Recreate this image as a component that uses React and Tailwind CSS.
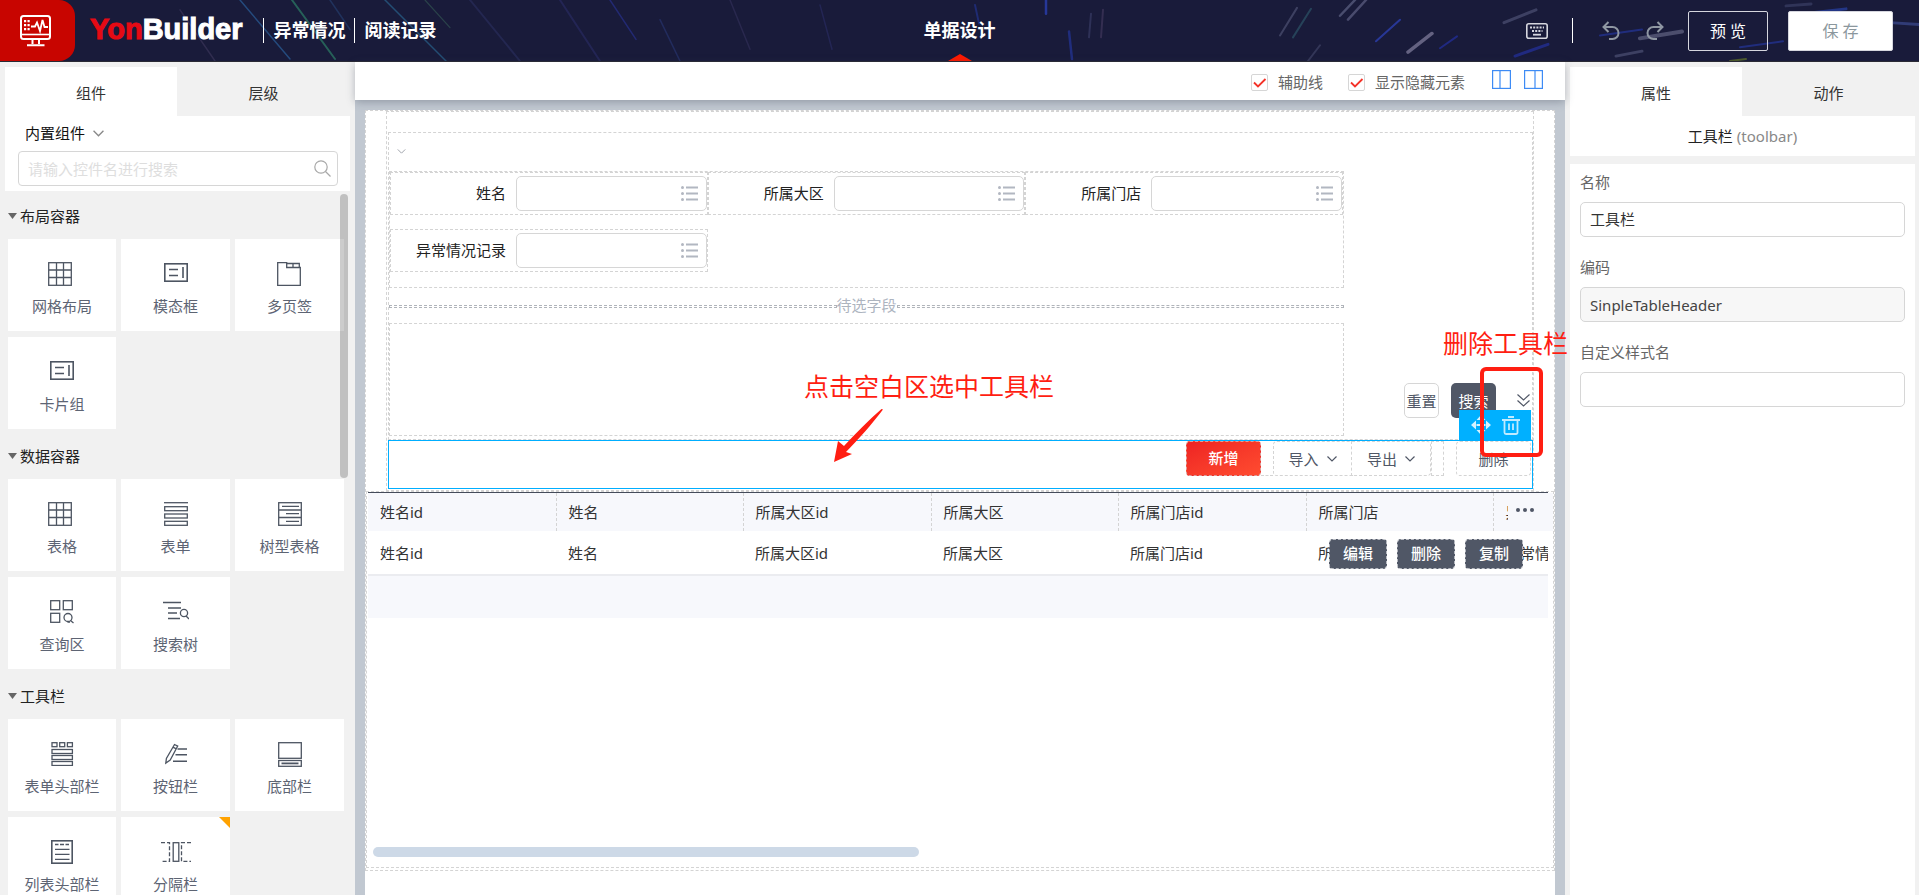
import React from "react";

const FONT = "font-['Noto_Sans','Noto_Sans_CJK_SC',sans-serif]";

function Svg({ w = 24, h = 24, children, className = "" }) {
  return (
    <svg
      width={w}
      height={h}
      viewBox={`0 0 ${w} ${h}`}
      fill="none"
      stroke="currentColor"
      strokeWidth="1.3"
      className={className}
      aria-hidden="true"
    >
      {children}
    </svg>
  );
}

const icons = {
  grid: (
    <Svg w={28}>
      <rect x="0.7" y="0.7" width="22.6" height="22.6" />
      <path d="M8.5 1v22M15.5 1v22M1 8h22M1 15.5h22" />
    </Svg>
  ),
  modal: (
    <Svg>
      <rect x="0.8" y="1.8" width="22.4" height="17.4" strokeWidth="1.6" />
      <path d="M5 7.500h9M5 13.500h9M19 5v11" strokeWidth="1.6" />
    </Svg>
  ),
  tabs: (
    <Svg w={26}>
      <path d="M0.7 0.7h9v4.8h13.6v17.8H0.7z" />
      <path d="M9.7 1.5h12.6v4M16 1.5v4" />
    </Svg>
  ),
  form: (
    <Svg>
      <path d="M0 0.7h24" />
      <rect x="0.7" y="4.7" width="22.6" height="4" />
      <rect x="0.7" y="12" width="22.6" height="4" />
      <rect x="0.7" y="19.3" width="22.6" height="4" />
    </Svg>
  ),
  tree: (
    <Svg>
      <rect x="0.7" y="0.7" width="22.6" height="22.6" />
      <path d="M1 8h22M1 15.5h22M4 4.3h17M8 11.7h13M8 19.3h13" />
    </Svg>
  ),
  query: (
    <Svg>
      <rect x="0.7" y="0.7" width="9" height="9" />
      <rect x="13.3" y="0.7" width="9" height="9" />
      <rect x="0.7" y="13.3" width="9" height="9" />
      <circle cx="18" cy="17.5" r="4" />
      <path d="M20.500 20.5l3 2.5M17.500 22h2.5" />
    </Svg>
  ),
  search: (
    <Svg w={26}>
      <path d="M0 2.5h18M5 8h13M5 13h9M5 18.5h12" strokeWidth="1.7" />
      <circle cx="21" cy="13" r="3.6" />
      <path d="M23 16l3 3" />
    </Svg>
  ),
  formHead: (
    <Svg>
      <rect x="2" y="0.7" width="5" height="4" />
      <rect x="9.7" y="0.7" width="5" height="4" />
      <rect x="17.4" y="0.7" width="5" height="4" />
      <rect x="2" y="7.5" width="20.4" height="4" />
      <rect x="2" y="13.5" width="20.4" height="4" />
      <rect x="2" y="19.5" width="20.4" height="4" />
    </Svg>
  ),
  buttons: (
    <Svg>
      <path d="M10.5 2.5l3.2 1.6-7.5 14-4.4 3 .6-4.6zM9 5.2l3.3 1.7" />
      <path d="M13.5 7H23M11.5 12.8H23M9 19.3h14" strokeWidth="1.6" />
    </Svg>
  ),
  bottom: (
    <Svg w={24} h={25}>
      <rect x="0.7" y="0.7" width="22.6" height="15.6" />
      <rect x="0.7" y="18.5" width="22.6" height="5.8" />
      <path d="M3.5 21.4h17" strokeWidth="1.8" />
    </Svg>
  ),
  listHead: (
    <Svg>
      <rect x="1.8" y="0.8" width="20.4" height="22.4" strokeWidth="1.6" />
      <path d="M5 4.5h3.5M10 4.5h4M15.5 4.5H19M5 9.3h14.5M5 14.3h14.5M5 19.3h14.5" />
    </Svg>
  ),
  split: (
    <Svg w={30} h={24}>
      <rect x="12.2" y="2.7" width="5.6" height="18.6" />
      <path d="M0 2.7h8.5v18.6H0" strokeDasharray="4 2" />
      <path d="M30 2.7h-9.5v18.6H30" strokeDasharray="4 2" />
    </Svg>
  ),
};

const sections = [
  {
    title: "布局容器",
    items: [
      ["网格布局", "grid"],
      ["模态框", "modal"],
      ["多页签", "tabs"],
      ["卡片组", "modal"],
    ],
  },
  {
    title: "数据容器",
    items: [
      ["表格", "grid"],
      ["表单", "form"],
      ["树型表格", "tree"],
      ["查询区", "query"],
      ["搜索树", "search"],
    ],
  },
  {
    title: "工具栏",
    items: [
      ["表单头部栏", "formHead"],
      ["按钮栏", "buttons"],
      ["底部栏", "bottom"],
      ["列表头部栏", "listHead"],
      ["分隔栏", "split", true],
    ],
  },
];

const columns = [
  ["姓名id", "w-[188px]"],
  ["姓名", "w-[187px]"],
  ["所属大区id", "w-[188px]"],
  ["所属大区", "w-[187px]"],
  ["所属门店id", "w-[188px]"],
  ["所属门店", "w-[187px]"],
  ["异常情况", "w-[188px]"],
];

function Chevron({ w = 10, h = 6, className = "" }) {
  return (
    <svg width={w} height={h} viewBox="0 0 10 6" fill="none" stroke="currentColor" strokeWidth="1.2" className={className} aria-hidden="true">
      <path d="M0.5 0.5L5 5l4.5-4.5" />
    </svg>
  );
}

function Streaks() {
  const lines = [
    [240, 0, 290, 60, "#2a5f9a", 1.5, 0.7],
    [292, 0, 335, 60, "#2f8f6d", 2, 0.6],
    [330, 0, 350, 30, "#27497f", 1.5, 0.5],
    [385, 0, 446, 62, "#2a6f9a", 1.5, 0.6],
    [425, 0, 450, 28, "#3b6a5a", 1.2, 0.5],
    [180, 10, 215, 62, "#3a3559", 1.5, 0.7],
    [470, 0, 520, 62, "#2b2f60", 2, 0.6],
    [560, 0, 600, 62, "#2a2c66", 2, 0.6],
    [610, 0, 636, 40, "#27308a", 1.5, 0.7],
    [660, 20, 680, 62, "#2b3c80", 1.5, 0.5],
    [730, 0, 750, 50, "#34315c", 1.5, 0.6],
    [820, 5, 832, 50, "#2b2d66", 1.5, 0.6],
    [975, 5, 979, 24, "#23369a", 2, 0.6],
    [1046, 0, 1046, 14, "#2a3fb0", 2.5, 0.8],
    [1069, 32, 1072, 60, "#24369a", 2.5, 0.7],
    [1091, 14, 1089, 38, "#34375f", 2, 0.8],
    [1103, 10, 1101, 38, "#3b3357", 2, 0.8],
    [1297, 8, 1280, 36, "#565a7c", 2, 0.6],
    [1311, 9, 1293, 38, "#2f5d6e", 2, 0.6],
    [1355, 0, 1340, 16, "#565a7c", 2.5, 0.8],
    [1366, 0, 1348, 20, "#6a6c90", 2.5, 0.6],
    [1400, 20, 1376, 42, "#2c3fae", 2, 0.8],
    [1432, 34, 1408, 53, "#8481a0", 3.5, 0.7],
    [1320, 46, 1308, 62, "#45496c", 2, 0.6],
    [1536, 10, 1504, 23, "#55597e", 3, 0.6],
    [1457, 37, 1440, 49, "#2330a0", 2, 0.7],
    [1548, 45, 1515, 57, "#2634b0", 3, 0.6],
    [1642, 30, 1600, 36, "#24359a", 2, 0.7],
    [1682, 32, 1640, 39, "#6e7090", 4, 0.6],
    [1642, 52, 1616, 57, "#55597e", 3, 0.6],
    [1811, 4, 1786, 6, "#3a3f66", 3, 0.7],
    [1846, 9, 1812, 13, "#2b48b8", 3, 0.6],
    [1783, 42, 1740, 48, "#24359a", 2, 0.7],
    [1919, 25, 1890, 23, "#3c4a90", 3, 0.7],
    [1746, 60, 1730, 62, "#5a6a2a", 2, 0.8],
  ];
  return (
    <svg className="absolute inset-0 h-full w-full" viewBox="0 0 1919 62" preserveAspectRatio="none" aria-hidden="true">
      {lines.map(([x1, y1, x2, y2, c, w, o]) => (
        <line key={`${x1}-${y1}`} x1={x1} y1={y1} x2={x2} y2={y2} stroke={c} strokeWidth={w} opacity={o} strokeLinecap="round" />
      ))}
    </svg>
  );
}

function Header() {
  return (
    <header className="relative grid h-[62px] shrink-0 grid-cols-[1fr_auto_1fr] items-stretch border-b border-[#2a2a35] bg-[#191b3a] text-white">
      <Streaks />
      <div className="relative flex items-center">
        <div className="flex h-full w-[75px] items-center rounded-r-2xl bg-[#c80500] pl-5">
          <svg width="32" height="32" viewBox="0 0 32 32" fill="none" stroke="#fff" strokeWidth="2" aria-hidden="true">
            <rect x="1" y="1" width="29" height="23" rx="2.5" />
            <path d="M2 19.5h27" strokeWidth="1.6" />
            <path d="M12.5 24v5M19 24v5M7 30.3h17.5" />
            <path d="M11 11.5h4l2-4 3 8.500 2.500-11 2 7h3.500" strokeWidth="1.8" />
            <g fill="#fff" stroke="none">
              <path d="M4 5h2.200v2.200H4zM7.500 5h2.200v2.200H7.500zM4 9h2.200v2.200H4zM7.500 9h2.200v2.200H7.500zM4 13h2.200v2.200H4zM7.500 13h2.200v2.200H7.500z" />
            </g>
          </svg>
        </div>
        <div className="ml-[15px] pb-1 font-['Liberation_Sans',sans-serif] text-[29px] leading-8 font-bold [-webkit-text-stroke:1px]">
          <span className="text-[#e60a14]">Yon</span>Builder
        </div>
        <span className="ml-5 h-[25px] w-px bg-white" />
        <span className="ml-[10px] pb-[2px] text-lg leading-6 font-bold">异常情况</span>
        <span className="ml-[8px] h-[25px] w-px bg-white" />
        <span className="ml-[10px] pb-[2px] text-lg leading-6 font-bold">阅读记录</span>
      </div>
      <div className="relative flex items-center">
        <h1 className="pb-[2px] text-lg leading-6 font-bold">单据设计</h1>
        <svg width="24" height="7" viewBox="0 0 24 7" className="absolute bottom-0 left-1/2 -translate-x-1/2" aria-hidden="true">
          <path d="M0 7L12 0l12 7z" fill="#ff1a00" />
        </svg>
      </div>
      <div className="relative flex items-center justify-end pr-[26px]">
        <button type="button" aria-label="快捷键" className="text-[#d5d6de]">
          <svg width="22" height="16" viewBox="0 0 22 16" fill="none" stroke="currentColor" strokeWidth="1.6" aria-hidden="true">
            <rect x="0.8" y="0.8" width="20.4" height="14.4" rx="2" />
            <path d="M4 4.500h14" strokeDasharray="2 1.200" strokeWidth="1.800" />
            <path d="M6 8h10.500" strokeDasharray="2 1.200" strokeWidth="1.800" />
            <path d="M7 11.700h8" strokeWidth="1.800" />
          </svg>
        </button>
        <span className="mx-6 h-[25px] w-px bg-white" />
        <button type="button" aria-label="撤销" className="ml-[5px] text-[#8f97a3]">
          <svg width="18" height="19" viewBox="0 0 18 19" fill="none" stroke="currentColor" strokeWidth="2" aria-hidden="true">
            <path d="M6.500 1L1.500 6l5 5M1.500 6h9a6 6 0 0 1 0 12H7" />
          </svg>
        </button>
        <button type="button" aria-label="重做" className="ml-[26px] text-[#8f97a3]">
          <svg width="18" height="19" viewBox="0 0 18 19" fill="none" stroke="currentColor" strokeWidth="2" aria-hidden="true">
            <path d="M11.500 1l5 5-5 5M16.500 6h-9a6 6 0 0 0 0 12H11" />
          </svg>
        </button>
        <button type="button" className="ml-6 h-10 w-20 rounded-xs border border-[#d5d6de] text-base leading-5 text-white">预 览</button>
        <button type="button" className="ml-5 h-10 w-[105px] rounded-xs border border-[#d5d6de] bg-white text-base leading-5 text-[#8b979d]">保 存</button>
      </div>
    </header>
  );
}

function Tabs({ items }) {
  return (
    <div className="grid h-[49px] grid-cols-[172px_1fr] text-[#333]" role="tablist">
      {items.map((t, i) => (
        <button
          key={t}
          type="button"
          role="tab"
          aria-selected={i === 0}
          className={i === 0 ? "bg-white pt-[2px]" : "bg-[#f1f1f1] pt-[2px]"}
        >
          {t}
        </button>
      ))}
    </div>
  );
}

function Palette() {
  return (
    <aside className="flex w-[355px] shrink-0 flex-col bg-[#f1f1f1]">
      <div className="mt-[5px] mr-[5px] ml-[5px]">
        <Tabs items={["组件", "层级"]} />
        <div className="h-[75px] bg-white pt-[7px] pr-3 pl-[13px]">
          <button type="button" className="flex items-center gap-2 pl-[7px] text-[#111]">
            内置组件
            <Chevron w={11} h={7} className="text-[#888]" />
          </button>
          <div className="relative mt-2">
            <input
              type="text"
              aria-label="搜索控件"
              placeholder="请输入控件名进行搜索"
              className="h-[35px] w-full rounded-[4px] border border-[#d6d6d6] px-[9px] outline-none placeholder:text-[#dedede]"
            />
            <svg width="17" height="17" viewBox="0 0 17 17" fill="none" stroke="#a8a8a8" strokeWidth="1.200" className="absolute top-[9px] right-[7px]" aria-hidden="true">
              <circle cx="7" cy="7" r="6.200" />
              <path d="M11.500 11.500l5 5" />
            </svg>
          </div>
        </div>
      </div>
      <div className="relative min-h-0 flex-1 overflow-hidden pl-2">
        <div className="absolute top-[3px] right-[7px] z-10 h-[284px] w-2 rounded-full bg-black/20" />
        {sections.map((s, i) => (
          <section key={s.title}>
            <h2 className={i === 0 ? "flex h-12 items-center gap-[3px] pt-[2px] text-[#222]" : "flex h-[50px] items-center gap-[3px] pt-[4px] text-[#222]"}>
              <svg width="9" height="6" viewBox="0 0 9 6" className="text-[#666]" aria-hidden="true">
                <path d="M0 0h9L4.500 6z" fill="currentColor" />
              </svg>
              {s.title}
            </h2>
            <div className="grid grid-cols-[108px_109px_109px] gap-x-[5px] gap-y-[6px]">
              {s.items.map(([label, icon, flag]) => (
                <button key={label} type="button" className="relative flex h-[92px] flex-col items-center bg-white pt-[23px] text-[#5d6473]">
                  <span className="flex h-6 items-start text-[#4d5562]">{icons[icon]}</span>
                  <span className="mt-[10px]">{label}</span>
                  {flag && (
                    <svg width="11" height="11" viewBox="0 0 11 11" className="absolute top-0 right-0" aria-hidden="true">
                      <path d="M0 0h11v11z" fill="#ffa200" />
                    </svg>
                  )}
                </button>
              ))}
            </div>
          </section>
        ))}
      </div>
    </aside>
  );
}

function Check({ id, label }) {
  return (
    <div className="flex items-center gap-[10px]">
      <span className="grid">
        <input id={id} type="checkbox" defaultChecked className="peer col-start-1 row-start-1 size-[17px] appearance-none rounded-[2px] border border-[#d6d6d6] bg-white" />
        <svg width="17" height="17" viewBox="0 0 17 17" fill="none" stroke="#f43228" strokeWidth="1.800" className="pointer-events-none invisible col-start-1 row-start-1 peer-checked:visible" aria-hidden="true">
          <path d="M3 8.500l4 4 7.500-7.500" />
        </svg>
      </span>
      <label htmlFor={id} className="text-[#666]">{label}</label>
    </div>
  );
}

function Field({ id, label }) {
  return (
    <div className="flex items-center border border-dashed border-[#d4d4d4] py-[3px]">
      <label htmlFor={id} className="w-[115px] shrink-0 pb-[2px] text-right text-[#222]">{label}</label>
      <div className="relative ml-[10px] flex-1">
        <input id={id} type="text" className="block h-[35px] w-full rounded-[5px] border border-[#d6d6d6] bg-white px-2 outline-none" />
        <svg width="17" height="15" viewBox="0 0 17 15" fill="#b2b7c1" className="absolute top-[10px] right-[9px]" aria-hidden="true">
          <circle cx="1.500" cy="1.500" r="1.500" />
          <circle cx="1.500" cy="7.500" r="1.500" />
          <circle cx="1.500" cy="13.500" r="1.500" />
          <path d="M5 .6h12v1.900H5zM5 6.600h12v1.900H5zM5 12.600h12v1.900H5z" />
        </svg>
      </div>
    </div>
  );
}

function QueryArea() {
  return (
    <div className="flex border border-dashed border-[#d4d4d4] pb-[3px]">
      <div className="min-w-0 flex-1">
        <div className="flex h-[38px] items-center pl-2">
          <button type="button" aria-label="折叠" className="-mt-[2px] text-[#a0a4ac]">
            <Chevron w={9} h={5} />
          </button>
        </div>
        <div className="grid grid-cols-3 gap-y-[14px] border border-dashed border-[#d4d4d4] pb-[15px]">
          <Field id="f-name" label="姓名" />
          <Field id="f-region" label="所属大区" />
          <Field id="f-store" label="所属门店" />
          <Field id="f-record" label="异常情况记录" />
        </div>
        <div className="flex h-[35px] items-center pt-[2px] text-[#adb4bf]">
          <span className="h-[3px] flex-1 border border-dashed border-[#b0b4ba]" />
          <span className="pb-1">待选字段</span>
          <span className="h-[3px] flex-1 border border-dashed border-[#b0b4ba]" />
        </div>
        <div className="h-[113px] border border-dashed border-[#d4d4d4]" />
      </div>
      <div className="flex w-[188px] items-end justify-end pr-[2px] pb-[18px]">
        <button type="button" className="h-[35px] w-[35px] rounded-[5px] border border-[#d6d6d6] whitespace-nowrap text-[#505766]">
          <span className="-mx-2">重置</span>
        </button>
        <button type="button" className="ml-3 h-[35px] w-[45px] rounded-[5px] bg-[#505766] text-white">搜索</button>
        <button type="button" aria-label="展开" className="ml-[21px] flex h-[35px] items-center text-[#505766]">
          <svg width="13" height="13" viewBox="0 0 13 13" fill="none" stroke="currentColor" strokeWidth="1.200" aria-hidden="true">
            <path d="M.5.500l6 5.500 6-5.500M.5 6.500l6 5.500 6-5.500" />
          </svg>
        </button>
      </div>
    </div>
  );
}

function SelectedToolbar() {
  return (
    <div className="relative flex h-[49px] items-start justify-end border border-[#00aeff] pr-px text-[#505766]">
      <button type="button" className="h-[35px] w-[75px] rounded-[4px] border border-dashed border-[#dca09c] bg-linear-to-br from-[#ee2223] to-[#ff4b30] pb-[2px] font-medium text-white">新增</button>
      <span className="h-[35px] w-3 border-b border-dashed border-[#d4d4d4]" />
      <button type="button" className="flex h-[35px] w-[79px] items-center justify-center gap-2 rounded-l-[4px] border border-dashed border-[#d4d4d4]">
        导入
        <Chevron />
      </button>
      <button type="button" className="flex h-[35px] w-[79px] items-center justify-center gap-2 rounded-r-[4px] border border-l-0 border-dashed border-[#d4d4d4]">
        导出
        <Chevron />
      </button>
      <span className="h-[35px] w-[13px] border border-dashed border-[#d4d4d4]" />
      <button type="button" className="ml-3 h-[35px] w-[75px] rounded-[4px] border border-dashed border-[#d4d4d4]">删除</button>

      <div className="absolute -top-[31px] right-px flex h-[30px] w-[72px] items-center justify-around bg-[#00b0ff] px-[6px]">
        <button type="button" aria-label="移动" className="text-[#d3f1ff]">
          <svg width="20" height="20" viewBox="0 0 20 20" aria-hidden="true">
            <path d="M5.500 10h9M10 5.500v9" stroke="currentColor" strokeWidth="2" />
            <path d="M10 0l4.500 5h-9zM10 20l4.500-5h-9zM0 10l5-4.500v9zM20 10l-5-4.500v9z" fill="currentColor" />
          </svg>
        </button>
        <button type="button" aria-label="删除工具栏" className="text-[#bfeaff]">
          <svg width="18" height="19" viewBox="0 0 18 19" fill="none" stroke="currentColor" strokeWidth="1.800" aria-hidden="true">
            <path d="M0 4h18M6 1h6M2.500 4v12.500a1.500 1.500 0 0 0 1.500 1.500h10a1.500 1.500 0 0 0 1.500-1.500V4M7 7.500v6.500M11 7.500v6.500" />
          </svg>
        </button>
      </div>

      <p className="absolute -top-[71px] left-[415px] text-[25px] leading-8 whitespace-nowrap text-[#ff1e12]">点击空白区选中工具栏</p>
      <svg width="49" height="55" viewBox="0 0 49 55" className="absolute -top-[33px] left-[445px]" aria-hidden="true">
        <path d="M49 1.500L47.500 1C35 12 22 25 10 38L4 33 0 54l18-8-6-2C24 32 38 16 49 1.500z" fill="#ff1e12" />
      </svg>
      <p className="absolute -top-[114px] -right-[36px] text-[25px] leading-8 whitespace-nowrap text-[#ff1e12]">删除工具栏</p>
      <div className="pointer-events-none absolute -top-[74px] -right-[11px] h-[90px] w-[63px] rounded-[6px] border-4 border-[#ff1e12]" />
    </div>
  );
}

function DataTable() {
  return (
    <div className="flex h-[377px] flex-col border border-dashed border-[#d4d4d4]">
      <div className="flex pl-px">
        <div className="relative min-w-0 flex-1 overflow-hidden border-t border-[#454c5b]">
          <table className="w-[1313px] table-fixed border-collapse text-left text-[#333]">
            <thead>
              <tr className="h-[38px] bg-[#f7f8fc]">
                {columns.map(([c, w]) => (
                  <th key={c} scope="col" className={`${w} border-r border-dashed border-[#d4d4d4] pl-3 font-normal`}>{c}</th>
                ))}
              </tr>
            </thead>
            <tbody>
              <tr className="h-[44px] border-b-2 border-[#ebecf0]">
                {columns.map(([c]) => (
                  <td key={c} className="pt-px pl-3">{c}</td>
                ))}
              </tr>
              <tr className="h-[43px] bg-[#f7f8fc]">
                <td colSpan={7} />
              </tr>
            </tbody>
          </table>
          <button type="button" aria-label="更多" className="absolute top-0 right-0 flex h-[37px] w-10 items-center bg-[#f7f8fc] pb-1 pl-[8px]">
            <svg width="18" height="4" viewBox="0 0 18 4" fill="#505766" aria-hidden="true">
              <circle cx="2" cy="2" r="2" />
              <circle cx="9" cy="2" r="2" />
              <circle cx="16" cy="2" r="2" />
            </svg>
          </button>
          <div className="absolute top-[46px] right-[25px] flex gap-[10px]">
            {["编辑", "删除", "复制"].map((t) => (
              <button key={t} type="button" className="h-[30px] w-[58px] rounded-[4px] border border-dashed border-[#b9bcc3] bg-[#505766] pb-[2px] font-medium text-white">{t}</button>
            ))}
          </div>
        </div>
        <div className="mt-px h-[38px] w-[5px] bg-[#f7f8fc]" />
      </div>
      <div className="mt-auto mb-[10px] ml-[6px] h-[10px] w-[46%] rounded-full bg-[#cdd9e7]" />
    </div>
  );
}

function Canvas() {
  return (
    <main className="relative z-10 flex min-w-0 flex-1 flex-col bg-[#c1c8d1]">
      <div className="relative flex h-[38px] shrink-0 items-center justify-end bg-white pt-[2px] pr-[22px] shadow-[0_2px_8px_rgba(60,70,85,0.35)]">
        <Check id="guides" label="辅助线" />
        <span className="w-[25px]" />
        <Check id="hidden-items" label="显示隐藏元素" />
        <button type="button" aria-label="左侧面板" className="-mt-[6px] ml-[27px] text-[#3d8bf5]">
          <svg width="19" height="19" viewBox="0 0 19 19" fill="none" stroke="currentColor" strokeWidth="1.200" aria-hidden="true">
            <rect x="0.600" y="0.600" width="17.800" height="17.800" />
            <path d="M8 1v17" />
          </svg>
        </button>
        <button type="button" aria-label="右侧面板" className="-mt-[6px] ml-[13px] text-[#3d8bf5]">
          <svg width="19" height="19" viewBox="0 0 19 19" fill="none" stroke="currentColor" strokeWidth="1.200" aria-hidden="true">
            <rect x="0.600" y="0.600" width="17.800" height="17.800" />
            <path d="M11 1v17" />
          </svg>
        </button>
      </div>
      <div className="mx-[10px] mt-[10px] flex-1 bg-white">
        <div className="border border-dashed border-[#d4d4d4] pb-[2px]">
          <div className="mx-5 border border-dashed border-[#d4d4d4] pt-5 pb-px pl-px">
            <QueryArea />
            <SelectedToolbar />
          </div>
          <DataTable />
        </div>
      </div>
    </main>
  );
}

function Prop({ id, label, value, readOnly }) {
  return (
    <div>
      <label htmlFor={id} className="block text-[#666]">{label}</label>
      <input
        id={id}
        type="text"
        defaultValue={value}
        readOnly={readOnly}
        className={
          readOnly
            ? "mt-[10px] block h-[35px] w-full rounded-[5px] border border-[#d6d6d6] bg-[#f7f7f7] px-[9px] text-[#444] outline-none"
            : "mt-[10px] block h-[35px] w-full rounded-[5px] border border-[#d6d6d6] bg-white px-[9px] pb-[2px] text-[#333] outline-none"
        }
      />
    </div>
  );
}

function Inspector() {
  return (
    <aside className="flex w-[354px] shrink-0 flex-col bg-[#f1f1f1] pt-[5px] pr-1 pl-[5px]">
      <Tabs items={["属性", "动作"]} />
      <h2 className="flex h-10 items-center justify-center gap-1 bg-white text-[#222]">
        工具栏 <span className="text-[#888]">(toolbar)</span>
      </h2>
      <div className="mt-2 flex flex-1 flex-col gap-5 bg-white px-[10px] pt-2">
        <Prop id="p-name" label="名称" value="工具栏" />
        <Prop id="p-code" label="编码" value="SinpleTableHeader" readOnly />
        <Prop id="p-style" label="自定义样式名" value="" />
      </div>
    </aside>
  );
}

export default function App() {
  return (
    <div className={`${FONT} flex h-screen flex-col overflow-hidden bg-white text-[15px] leading-5`}>
      <Header />
      <div className="flex min-h-0 flex-1">
        <Palette />
        <Canvas />
        <Inspector />
      </div>
    </div>
  );
}
